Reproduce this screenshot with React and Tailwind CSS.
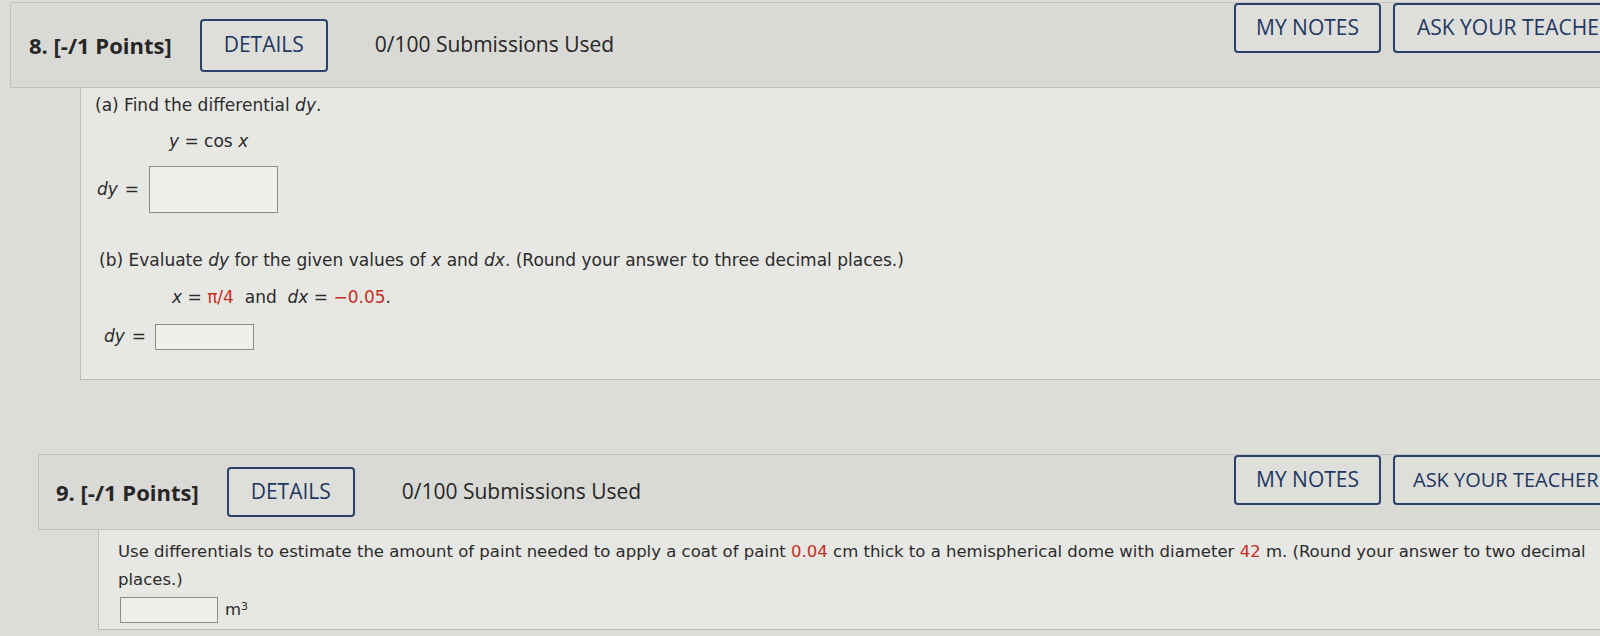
import React from 'react';

const head = { fontFamily: '"Open Sans", "Liberation Sans", sans-serif' };
const body = { fontFamily: '"DejaVu Sans", Verdana, sans-serif' };

const NavButton = ({ children, className = '' }) => (
  <div
    className={`flex items-center justify-center border-2 border-[#2b4268] rounded-[4px] text-[#1f3862] font-medium bg-[#dededa] shrink-0 ${className}`}
  >
    {children}
  </div>
);

const Red = ({ children }) => <span className="text-[#c62d22]">{children}</span>;

const Header = ({ num, className = '', detailsH, askClass }) => (
  <div className={`flex border border-[#c2c2be] bg-[#d9d9d5] ${className}`} style={head}>
    <div className="flex items-center h-full">
      <span className="text-[22px] font-bold text-[#262626] whitespace-nowrap">
        {num}. [-/1 Points]
      </span>
      <NavButton className={`ml-[28px] w-[128px] text-[21px] ${detailsH}`}>DETAILS</NavButton>
      <span className="ml-[47px] text-[21px] text-[#262626] whitespace-nowrap">0/100 Submissions Used</span>
    </div>
    <div className="ml-auto flex gap-[12px]">
      <NavButton className="w-[147px] h-[50px] text-[21px]">MY NOTES</NavButton>
      <NavButton className={`w-[260px] h-[50px] justify-start rounded-r-none border-r-0 whitespace-nowrap ${askClass}`}>
        ASK YOUR TEACHER
      </NavButton>
    </div>
  </div>
);

export default function App() {
  return (
    <div className="w-[1600px] h-[636px] overflow-hidden bg-[#dcdcd8] text-[#2b2b2b]">
      {/* question 8 */}
      <div className="pl-[10px] pt-[2px]">
        <Header num={8} className="w-[1644px] h-[86px] pl-[18px]" detailsH="h-[53px]" askClass="pl-[22px] text-[21px]" />
        <div className="ml-[70px] h-[292px] bg-[#e7e7e4] border-l border-b border-[#bdbdb9] pl-[14px] pt-[6px] text-[17px]" style={body}>
          <div className="h-[24px] flex items-center">
            (a) Find the differential&nbsp;<i>dy</i>.
          </div>
          <div className="h-[24px] mt-[12px] flex items-center pl-[74px]">
            <i>y</i>&nbsp;= cos&nbsp;<i>x</i>
          </div>
          <div className="mt-[12px] flex items-center">
            <i className="ml-[2px]">dy</i>
            <span className="ml-[7px]">=</span>
            <div className="ml-[10px] w-[129px] h-[47px] bg-[#efefec] border border-[#8c8c8a]" />
          </div>
          <div className="mt-[36px] h-[24px] flex items-center pl-[4px] whitespace-nowrap">
            (b) Evaluate&nbsp;<i>dy</i>&nbsp;for the given values of&nbsp;<i>x</i>&nbsp;and&nbsp;<i>dx</i>. (Round your answer to three decimal places.)
          </div>
          <div className="mt-[13px] h-[24px] flex items-center pl-[77px] whitespace-pre">
            <i>x</i> = <Red>π/4</Red>  and  <i>dx</i> = <Red>−0.05</Red>.
          </div>
          <div className="mt-[14px] flex items-center pl-[9px]">
            <i>dy</i>
            <span className="ml-[7px]">=</span>
            <div className="ml-[9px] w-[99px] h-[26px] bg-[#efefec] border border-[#8c8c8a]" />
          </div>
        </div>
      </div>

      {/* question 9 */}
      <div className="pl-[38px] mt-[74px]">
        <Header num={9} className="w-[1616px] h-[76px] pl-[17px]" detailsH="h-[50px]" askClass="pl-[18px] text-[20px]" />
        <div className="ml-[60px] h-[100px] bg-[#e7e7e4] border-l border-b border-[#bdbdb9] pl-[19px] pt-[8px] text-[16.5px] leading-[28px]" style={body}>
          <p>
            Use differentials to estimate the amount of paint needed to apply a coat of paint <Red>0.04</Red> cm thick to a hemispherical dome with diameter <Red>42</Red> m. (Round your answer to two decimal places.)
          </p>
          <div className="flex items-center mt-[2px]">
            <div className="ml-[2px] w-[98px] h-[26px] bg-[#efefec] border border-[#8c8c8a]" />
            <span className="ml-[7px]">
              m<sup className="text-[11px]">3</sup>
            </span>
          </div>
        </div>
      </div>
    </div>
  );
}
